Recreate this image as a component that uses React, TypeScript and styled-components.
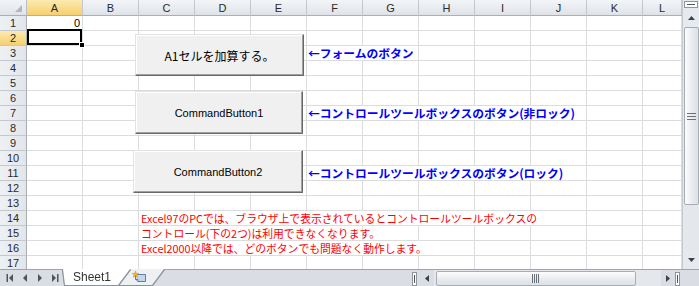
import React from "react";
import styled, { createGlobalStyle } from "styled-components";

const GlobalStyle = createGlobalStyle`
  html, body { margin: 0; padding: 0; background: #fff; overflow: hidden; }
  body { font-family: "Liberation Sans", Arial, sans-serif; }
`;

const JP = `"Noto Sans CJK JP", "Noto Sans", sans-serif`;
const COLS = ["A", "B", "C", "D", "E", "F", "G", "H", "I", "J", "K", "L"];

type Kind = "num" | "red" | "blue";
type Content = { col: number; span: number; text: string; kind: Kind };

const CONTENT: Record<number, Content[]> = {
  1: [{ col: 0, span: 1, text: "0", kind: "num" }],
  3: [{ col: 5, span: 2, text: "←フォームのボタン", kind: "blue" }],
  7: [{ col: 5, span: 5, text: "←コントロールツールボックスのボタン(非ロック)", kind: "blue" }],
  11: [{ col: 5, span: 5, text: "←コントロールツールボックスのボタン(ロック)", kind: "blue" }],
  14: [{ col: 2, span: 8, text: "Excel97のPCでは、ブラウザ上で表示されているとコントロールツールボックスの", kind: "red" }],
  15: [{ col: 2, span: 4, text: "コントロール(下の2つ)は利用できなくなります。", kind: "red" }],
  16: [{ col: 2, span: 6, text: "Excel2000以降では、どのボタンでも問題なく動作します。", kind: "red" }],
};

const Window = styled.div`
  width: 699px;
  height: 286px;
  display: flex;
  flex-direction: column;
  overflow: hidden;
  background: #fff;
`;

const Main = styled.div`
  display: flex;
  height: 269px;
`;

const Sheet = styled.div`
  position: relative;
  width: 682px;
  height: 269px;
  overflow: hidden;
`;

const Grid = styled.div`
  display: grid;
  grid-template-columns: 27px repeat(11, 56px) 39px;
  grid-template-rows: 16px;
  grid-auto-rows: 15px;
`;

const Corner = styled.div`
  position: relative;
  box-sizing: border-box;
  background: linear-gradient(#f2f4f7, #e0e4e9);
  border-right: 1px solid #b9bec5;
  border-bottom: 1px solid #a9afb7;
  &::after {
    content: "";
    position: absolute;
    right: 4px;
    bottom: 3px;
    border-style: solid;
    border-width: 0 0 7px 7px;
    border-color: transparent transparent #b3b8bf transparent;
  }
`;

const ColHead = styled.div<{ $sel?: boolean }>`
  box-sizing: border-box;
  border-right: 1px solid #c3c8ce;
  border-bottom: 1px solid #a9afb7;
  background: ${(p) => (p.$sel ? "linear-gradient(#fcebb0, #f6cf6e)" : "linear-gradient(#f3f5f8, #dfe3e8)")};
  font: 11px "Liberation Sans", Arial, sans-serif;
  color: #2a2a2a;
  display: flex;
  align-items: center;
  justify-content: center;
`;

const RowHead = styled.div<{ $sel?: boolean }>`
  box-sizing: border-box;
  border-right: 1px solid #a9afb7;
  border-bottom: 1px solid #c3c8ce;
  background: ${(p) => (p.$sel ? "linear-gradient(#fcebb0, #f6cf6e)" : "linear-gradient(90deg, #eef1f4, #e2e6eb)")};
  font: 11px "Liberation Sans", Arial, sans-serif;
  color: #2a2a2a;
  display: flex;
  align-items: center;
  justify-content: center;
`;

const Cell = styled.div<{ $span?: number; $kind?: Kind; $sel?: boolean }>`
  position: relative;
  box-sizing: border-box;
  grid-column: span ${(p) => p.$span ?? 1};
  border-right: 1px solid #dadcdd;
  border-bottom: 1px solid #dadcdd;
  display: flex;
  align-items: center;
  justify-content: ${(p) => (p.$kind === "num" ? "flex-end" : "flex-start")};
  padding: 0 ${(p) => (p.$kind === "num" ? "2px" : "0")} 0 ${(p) => (p.$kind === "blue" ? "1px" : "2px")};
  white-space: nowrap;
  font-family: ${(p) => (p.$kind === "num" ? `"Liberation Sans", Arial, sans-serif` : JP)};
  font-size: ${(p) => (p.$kind === "red" ? "10.8px" : p.$kind === "blue" ? "11.75px" : "11px")};
  font-weight: ${(p) => (p.$kind === "blue" ? 700 : 400)};
  color: ${(p) => (p.$kind === "red" ? "#ff0000" : p.$kind === "blue" ? "#0000ff" : "#000")};
  line-height: 14px;
  ${(p) =>
    p.$sel
      ? `z-index: 2;
    &::after {
      content: "";
      position: absolute;
      left: 0; right: 0; top: -2px; bottom: 0;
      border: 2px solid #000;
    }
    &::before {
      content: "";
      position: absolute;
      right: -3px; bottom: -3px;
      width: 4px; height: 4px;
      background: #000;
      border: 1px solid #fff;
      z-index: 3;
    }`
      : ""}
`;

const ObjButton = styled.div<{ $x: number; $y: number; $w: number; $h: number; $jp?: boolean }>`
  position: absolute;
  left: ${(p) => p.$x}px;
  top: ${(p) => p.$y}px;
  width: ${(p) => p.$w}px;
  height: ${(p) => p.$h}px;
  box-sizing: border-box;
  background: #f0f0f0;
  border-top: 1px solid #e3e3e3;
  border-left: 1px solid #e3e3e3;
  border-right: 1px solid #696969;
  border-bottom: 1px solid #696969;
  box-shadow: inset -1px -1px 0 #a0a0a0, inset 1px 1px 0 #ffffff;
  display: flex;
  align-items: center;
  justify-content: center;
  font-family: ${(p) => (p.$jp ? JP : `"Liberation Sans", Arial, sans-serif`)};
  font-size: ${(p) => (p.$jp ? "12px" : "11px")};
  color: #000;
  white-space: nowrap;
`;

/* vertical scrollbar */
const VScroll = styled.div`
  width: 17px;
  height: 269px;
  box-sizing: border-box;
  border-left: 1px solid #c5cad0;
  background: #e6e9ed;
  display: flex;
  flex-direction: column;
  align-items: center;
`;

const SplitBoxV = styled.div`
  margin-top: 1px;
  width: 14px;
  height: 7px;
  box-sizing: border-box;
  background: #fff;
  border: 1px solid #8f959c;
  display: flex;
  align-items: center;
  justify-content: center;
  &::after {
    content: "";
    width: 8px;
    height: 1px;
    background: #555;
  }
`;

const ArrowBtn = styled.div<{ $w: number; $h: number }>`
  width: ${(p) => p.$w}px;
  height: ${(p) => p.$h}px;
  display: flex;
  align-items: center;
  justify-content: center;
  flex: none;
`;

const Track = styled.div<{ $dir: "v" | "h" }>`
  flex: 1;
  display: flex;
  flex-direction: ${(p) => (p.$dir === "v" ? "column" : "row")};
  align-self: stretch;
  align-items: center;
  background-color: #e4e7eb;
  background-image: radial-gradient(#d5d9de 0.6px, transparent 0.7px);
  background-size: 2px 2px;
`;

const Thumb = styled.div<{ $dir: "v" | "h"; $len: number; $off: number }>`
  box-sizing: border-box;
  flex: none;
  ${(p) =>
    p.$dir === "v"
      ? `width: 15px; height: ${p.$len}px; margin-top: ${p.$off}px;
         background: linear-gradient(90deg, #fdfdfe, #e6e9ed 60%, #dde1e6);`
      : `height: 15px; width: ${p.$len}px; margin-left: ${p.$off}px;
         background: linear-gradient(#fdfdfe, #e6e9ed 60%, #dde1e6);`}
  border: 1px solid #a6acb4;
  border-radius: 2px;
  display: flex;
  align-items: center;
  justify-content: center;
`;

/* bottom bar */
const BottomBar = styled.div`
  display: flex;
  height: 17px;
  box-sizing: border-box;
  border-top: 1px solid #9ea4ac;
  background: #dadee4;
  align-items: stretch;
`;

const TabNav = styled.div`
  display: flex;
  width: 62px;
  flex: none;
  align-items: center;
  padding-left: 3px;
  box-sizing: border-box;
`;

const NavBtn = styled.div`
  width: 15px;
  height: 16px;
  display: flex;
  align-items: center;
  justify-content: center;
`;

const TabOutline = styled.div<{ $active?: boolean }>`
  position: relative;
  z-index: ${(p) => (p.$active ? 2 : 1)};
  filter: drop-shadow(1px 0 0 #8c939b) drop-shadow(-1px 0 0 #8c939b) drop-shadow(0 1px 0 #8c939b);
  margin-top: -1px;
`;

const TabShape = styled.div<{ $w: number; $active?: boolean }>`
  width: ${(p) => p.$w}px;
  height: 16px;
  background: ${(p) => (p.$active ? "#ffffff" : "#eef1f4")};
  clip-path: polygon(0 0, 100% 0, calc(100% - 12px) 100%, 2px 100%);
  display: flex;
  align-items: center;
  padding-left: ${(p) => (p.$active ? "10px" : "14px")};
  box-sizing: border-box;
  font: 12px "Liberation Sans", Arial, sans-serif;
  color: #333;
`;

const Tabs = styled.div`
  display: flex;
  flex: none;
  width: 349px;
  padding-left: 1px;
  & > *:nth-child(2) {
    margin-left: -12px;
  }
`;

const HSplitter = styled.div`
  width: 5px;
  height: 14px;
  margin: 1px 2px 0 0;
  box-sizing: border-box;
  background: #fff;
  border: 1px solid #8f959c;
  display: flex;
  justify-content: center;
  align-items: center;
  &::after {
    content: "";
    width: 1px;
    height: 8px;
    background: #555;
  }
`;

const HScroll = styled.div`
  display: flex;
  flex: 1;
  align-items: center;
`;

const CornerBox = styled.div`
  width: 17px;
  flex: none;
  background: #dadee4;
`;

const Grip = ({ dir }: { dir: "v" | "h" }) =>
  dir === "v" ? (
    <svg width="9" height="7" viewBox="0 0 9 7">
      {[0.5, 3.5, 6.5].map((y) => (
        <line key={y} x1="0" x2="9" y1={y} y2={y} stroke="#6b7178" strokeWidth="1" />
      ))}
    </svg>
  ) : (
    <svg width="8" height="9" viewBox="0 0 8 9">
      {[0.5, 2.5, 4.5, 6.5].map((x) => (
        <line key={x} y1="0" y2="9" x1={x} x2={x} stroke="#6b7178" strokeWidth="1" />
      ))}
    </svg>
  );

const Tri = ({ d }: { d: "up" | "down" | "left" | "right" }) => {
  const pts =
    d === "up"
      ? "0,4 7,4 3.5,0"
      : d === "down"
      ? "0,0 7,0 3.5,4"
      : d === "left"
      ? "4,0 4,7 0,3.5"
      : "0,0 0,7 4,3.5";
  const w = d === "up" || d === "down" ? 7 : 4;
  const h = d === "up" || d === "down" ? 4 : 7;
  return (
    <svg width={w} height={h} viewBox={`0 0 ${w} ${h}`}>
      <polygon points={pts} fill="#3c4249" />
    </svg>
  );
};

const NavIcon = ({ kind }: { kind: "first" | "prev" | "next" | "last" }) => (
  <svg width="8" height="8" viewBox="0 0 8 8">
    {kind === "first" && (
      <>
        <rect x="0.5" y="0" width="1.5" height="8" fill="#4a5560" />
        <polygon points="7,0 7,8 3,4" fill="#4a5560" />
      </>
    )}
    {kind === "prev" && <polygon points="6,0 6,8 2,4" fill="#4a5560" />}
    {kind === "next" && <polygon points="2,0 2,8 6,4" fill="#4a5560" />}
    {kind === "last" && (
      <>
        <polygon points="1,0 1,8 5,4" fill="#4a5560" />
        <rect x="6" y="0" width="1.5" height="8" fill="#4a5560" />
      </>
    )}
  </svg>
);

const NewSheetIcon = () => (
  <svg width="15" height="12" viewBox="0 0 15 12">
    <path d="M3.5 3.5 H13.5 V10.5 H6 L3.5 8.5 Z" fill="#c6d7ea" stroke="#5d7fa6" strokeWidth="1" />
    <path d="M3.5 8.5 L6 8.5 L6 10.5" fill="#e8eef6" stroke="#5d7fa6" strokeWidth="1" />
    <path d="M3.5 0 L4.3 2.4 L6.8 2.4 L4.8 3.9 L5.6 6.3 L3.5 4.8 L1.4 6.3 L2.2 3.9 L0.2 2.4 L2.7 2.4 Z" fill="#f5b324" stroke="#d98a10" strokeWidth="0.5" />
  </svg>
);

const ROWS = Array.from({ length: 17 }, (_, i) => i + 1);

function renderRow(r: number) {
  const items = CONTENT[r] ?? [];
  const out: React.ReactNode[] = [
    <RowHead key={`h${r}`} $sel={r === 2}>
      {r}
    </RowHead>,
  ];
  let c = 0;
  while (c < COLS.length) {
    const it = items.find((x) => x.col === c);
    if (it) {
      out.push(
        <Cell key={`${r}-${c}`} $span={it.span} $kind={it.kind}>
          {it.text}
        </Cell>
      );
      c += it.span;
    } else {
      out.push(<Cell key={`${r}-${c}`} $sel={r === 2 && c === 0} />);
      c += 1;
    }
  }
  return out;
}

export default function App() {
  return (
    <>
      <GlobalStyle />
      <Window>
        <Main>
          <Sheet>
            <Grid>
              <Corner />
              {COLS.map((c, i) => (
                <ColHead key={c} $sel={i === 0}>
                  {c}
                </ColHead>
              ))}
              {ROWS.map((r) => renderRow(r))}
            </Grid>
            <ObjButton $x={135} $y={34} $w={169} $h={42} $jp>
              A1セルを加算する。
            </ObjButton>
            <ObjButton $x={135} $y={91} $w={168} $h={43}>
              CommandButton1
            </ObjButton>
            <ObjButton $x={133} $y={150} $w={170} $h={43}>
              CommandButton2
            </ObjButton>
          </Sheet>
          <VScroll>
            <SplitBoxV />
            <ArrowBtn $w={15} $h={19}>
              <Tri d="up" />
            </ArrowBtn>
            <Track $dir="v">
              <Thumb $dir="v" $len={178} $off={0}>
                <Grip dir="v" />
              </Thumb>
            </Track>
            <ArrowBtn $w={15} $h={19}>
              <Tri d="down" />
            </ArrowBtn>
          </VScroll>
        </Main>
        <BottomBar>
          <TabNav>
            <NavBtn>
              <NavIcon kind="first" />
            </NavBtn>
            <NavBtn>
              <NavIcon kind="prev" />
            </NavBtn>
            <NavBtn>
              <NavIcon kind="next" />
            </NavBtn>
            <NavBtn>
              <NavIcon kind="last" />
            </NavBtn>
          </TabNav>
          <Tabs>
            <TabOutline $active>
              <TabShape $w={67} $active>
                Sheet1
              </TabShape>
            </TabOutline>
            <TabOutline>
              <TabShape $w={46}>
                <NewSheetIcon />
              </TabShape>
            </TabOutline>
          </Tabs>
          <HScroll>
            <HSplitter />
            <ArrowBtn $w={15} $h={16}>
              <Tri d="left" />
            </ArrowBtn>
            <Track $dir="h">
              <Thumb $dir="h" $len={200} $off={2}>
                <Grip dir="h" />
              </Thumb>
            </Track>
            <ArrowBtn $w={14} $h={16}>
              <Tri d="right" />
            </ArrowBtn>
            <HSplitter />
          </HScroll>
          <CornerBox />
        </BottomBar>
      </Window>
    </>
  );
}
